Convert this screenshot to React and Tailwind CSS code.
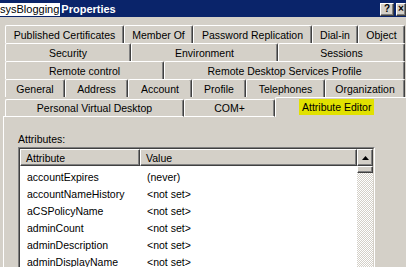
import React from 'react';

const rows = [
  [
    ['Published Certificates', 'w-[119px]'],
    ['Member Of', 'w-[69px]'],
    ['Password Replication', 'w-[119px]'],
    ['Dial-in', 'w-[46px]'],
    ['Object', 'w-[47px]'],
  ],
  [
    ['Security', 'w-[126px]'],
    ['Environment', 'w-[147px]'],
    ['Sessions', 'w-[127px]'],
  ],
  [
    ['Remote control', 'w-[159px]'],
    ['Remote Desktop Services Profile', 'w-[241px]'],
  ],
  [
    ['General', 'w-[60px]'],
    ['Address', 'w-[63px]'],
    ['Account', 'w-[64px]'],
    ['Profile', 'w-[54px]'],
    ['Telephones', 'w-[79px]'],
    ['Organization', 'w-[80px]'],
  ],
];

const attributes = [
  ['accountExpires', '(never)'],
  ['accountNameHistory', '<not set>'],
  ['aCSPolicyName', '<not set>'],
  ['adminCount', '<not set>'],
  ['adminDescription', '<not set>'],
  ['adminDisplayName', '<not set>'],
];

const Tab = ({ label, width, className = '' }) => (
  <div
    className={`${width} h-[18px] shrink-0 flex items-center justify-center rounded-t-[2px] border-t border-l border-r border-t-white border-l-white border-r-[#404040] shadow-[inset_-1px_0_0_#808080] ${className}`}
  >
    {label}
  </div>
);

const Raised = ({ className = '', children }) => (
  <div
    className={`border border-t-white border-l-white border-r-[#404040] border-b-[#404040] shadow-[inset_-1px_-1px_0_#808080] bg-[#d4d0c8] ${className}`}
  >
    {children}
  </div>
);

export default function App() {
  return (
    <div className="w-[406px] h-[267px] overflow-hidden bg-[#d4d0c8] text-black text-[10.5px] leading-[12px] font-['Liberation_Sans',Arial,sans-serif]">
      {/* ===== TITLE BAR ===== */}
      <div className="h-[17px] bg-[#0a246a] flex items-center">
        <span className="bg-white text-black text-[11px] leading-[13px] pr-[1px] mt-[1px]">
          sysBlogging
        </span>
        <span className="text-white font-bold text-[11px] leading-[13px] ml-[1px] mt-[1px]">
          Properties
        </span>
        <div className="ml-auto flex items-center gap-[2px] mt-[1px]">
          <Raised className="w-[14px] h-[13px] flex items-center justify-center font-bold text-[10px] leading-[10px]">
            ?
          </Raised>
          <Raised className="w-[10px] h-[13px] flex items-center justify-start overflow-hidden font-bold text-[10px] leading-[10px]">
            <span className="pl-[1px]">×</span>
          </Raised>
        </div>
      </div>

      {/* ===== TABS ===== */}
      <div className="mt-[8px] pl-[5px]">
        {rows.map((row, i) => (
          <div key={i} className="flex">
            {row.map(([label, width]) => (
              <Tab key={label} label={label} width={width} />
            ))}
          </div>
        ))}
      </div>
      <div className="flex items-end h-[20px] pl-[3px]">
        <div className="w-[2px] h-[18px] border-b border-white shrink-0" />
        <Tab label="Personal Virtual Desktop" width="w-[179px]" className="border-b border-b-white" />
        <Tab label="COM+" width="w-[91px]" className="border-b border-b-white" />
        <div className="flex-1 h-[20px] border-t border-l border-white rounded-tl-[2px] flex items-start pt-[1px]">
          <span className="bg-[#e1e100] px-[3px] h-[16px] leading-[16px] ml-[23px]">
            Attribute Editor
          </span>
        </div>
      </div>

      {/* ===== PANEL ===== */}
      <div className="ml-[3px] border-l border-white pl-[14px] pt-[16px]">
        <div className="h-[12px]">Attributes:</div>
        <div className="mt-[2px] w-[357px] border border-t-[#808080] border-l-[#808080] border-r-white border-b-white">
          <div className="border border-t-[#404040] border-l-[#404040] border-r-[#d4d0c8] border-b-[#d4d0c8] bg-white h-[130px] flex">
            <div className="flex-1">
              <div className="flex h-[17px]">
                <Raised className="w-[120px] pl-[5px] flex items-center">Attribute</Raised>
                <Raised className="flex-1 pl-[5px] flex items-center">Value</Raised>
              </div>
              <div className="pt-[2px]">
                {attributes.map(([name, value]) => (
                  <div key={name} className="flex h-[17px] items-center">
                    <div className="w-[120px] pl-[7px]">{name}</div>
                    <div className="pl-[7px]">{value}</div>
                  </div>
                ))}
              </div>
            </div>
            <div className="w-[16px] flex flex-col">
              <Raised className="h-[17px] flex items-center justify-center">
                <svg width="7" height="4" viewBox="0 0 7 4">
                  <path d="M3.5 0L7 4H0z" fill="#000" />
                </svg>
              </Raised>
              <Raised className="h-[7px]" />
              <div className="flex-1 bg-[repeating-conic-gradient(#d4d0c8_0_25%,#ffffff_0_50%)] bg-size-[2px_2px]" />
            </div>
          </div>
        </div>
      </div>
    </div>
  );
}
